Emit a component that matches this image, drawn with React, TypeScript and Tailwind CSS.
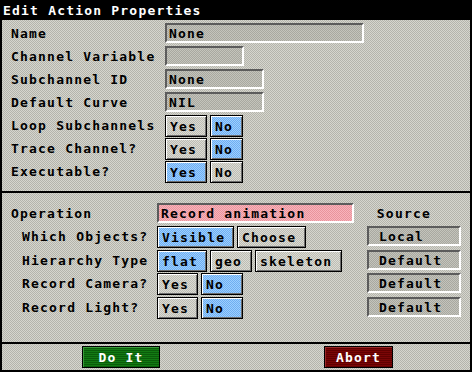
import React from 'react';

// Dithered backgrounds, like the old Motif/SGI panels
const DITHER_BG = "bg-[repeating-conic-gradient(#d6d6ce_0%_25%,#b4b4ac_0%_50%)] bg-[length:2px_2px]";
const FIELD_BG = "bg-[repeating-conic-gradient(#c4c4bc_0%_25%,#a8a8a0_0%_50%)] bg-[length:2px_2px]";
const BLUE_BG = "bg-[repeating-conic-gradient(#9ccfff_0%_25%,#70aef0_0%_50%)] bg-[length:2px_2px]";
const PINK_BG = "bg-[repeating-conic-gradient(#f8b4bc_0%_25%,#e8949c_0%_50%)] bg-[length:2px_2px]";
const BTN_BG = "bg-[repeating-conic-gradient(#dcdcd4_0%_25%,#bcbcb4_0%_50%)] bg-[length:2px_2px]";

const font = "font-['DejaVu_Sans_Mono','Liberation_Mono',monospace] font-bold text-[13px] tracking-[1.2px] leading-none";

function Field({ w, text, bg = FIELD_BG, pad = "pl-[2px]" }: { w: string; text?: string; bg?: string; pad?: string }) {
  return (
    <div className={`${w} h-5 ${bg} border-2 border-t-[#5c5c5c] border-l-[#5c5c5c] border-r-white border-b-white flex items-center ${pad} text-black`}>
      {text}
    </div>
  );
}

function Btn({ w, text, on }: { w: string; text: string; on?: boolean }) {
  return (
    <div
      className={`${w} h-[22px] ${on ? BLUE_BG : BTN_BG} border border-black shadow-[inset_1px_1px_0_#ffffff,inset_-1px_-1px_0_#6c6c6c] flex items-center pl-[4px] text-black`}
    >
      {text}
    </div>
  );
}

export default function App() {
  const topRows = [
    { label: "Name", ctl: <Field w="w-[199px]" text="None" /> },
    { label: "Channel Variable", ctl: <Field w="w-[79px]" /> },
    { label: "Subchannel ID", ctl: <Field w="w-[99px]" text="None" /> },
    { label: "Default Curve", ctl: <Field w="w-[99px]" text="NIL" /> },
    {
      label: "Loop Subchannels",
      ctl: (
        <div className="flex gap-[3px]">
          <Btn w="w-[42px]" text="Yes" />
          <Btn w="w-[33px]" text="No" on />
        </div>
      ),
    },
    {
      label: "Trace Channel?",
      ctl: (
        <div className="flex gap-[3px]">
          <Btn w="w-[42px]" text="Yes" />
          <Btn w="w-[33px]" text="No" on />
        </div>
      ),
    },
    {
      label: "Executable?",
      ctl: (
        <div className="flex gap-[3px]">
          <Btn w="w-[42px]" text="Yes" on />
          <Btn w="w-[33px]" text="No" />
        </div>
      ),
    },
  ];

  return (
    <div className={`w-[472px] h-[372px] flex flex-col border-x-2 border-b-2 border-black ${DITHER_BG} ${font}`}>
      {/* Title bar */}
      <div className="h-5 -mx-[2px] bg-black text-white flex items-center pl-[3px]">
        Edit Action Properties
      </div>

      {/* Channel settings */}
      <div className="h-[171px] pt-[3px] pl-[9px] flex flex-col">
        {topRows.map((r) => (
          <div key={r.label} className="h-[23px] flex items-start">
            <div className="w-[154px] h-5 flex items-center text-black">{r.label}</div>
            {r.ctl}
          </div>
        ))}
      </div>

      <div className="h-[2px] bg-black" />

      {/* Operation settings */}
      <div className="h-[149px] pt-[10px] pl-[9px] pr-[9px] flex flex-col">
        <div className="h-[23px] flex items-start">
          <div className="w-[146px] h-5 flex items-center text-black">Operation</div>
          <Field w="w-[197px]" text="Record animation" bg={PINK_BG} />
          <div className="flex-1 h-5 flex items-center justify-end pr-[30px] text-black">Source</div>
        </div>

        <div className="h-[24px] flex items-start">
          <div className="w-[146px] h-5 flex items-center pl-[11px] text-black">Which Objects?</div>
          <div className="flex gap-[3px]">
            <Btn w="w-[77px]" text="Visible" on />
            <Btn w="w-[69px]" text="Choose" />
          </div>
          <div className="flex-1" />
          <Field w="w-[94px]" text="Local" pad="pl-[10px]" />
        </div>

        <div className="h-[23px] flex items-start">
          <div className="w-[146px] h-5 flex items-center pl-[11px] text-black">Hierarchy Type</div>
          <div className="flex gap-[3px]">
            <Btn w="w-[50px]" text="flat" on />
            <Btn w="w-[42px]" text="geo" />
            <Btn w="w-[87px]" text="skeleton" />
          </div>
          <div className="flex-1" />
          <Field w="w-[94px]" text="Default" pad="pl-[10px]" />
        </div>

        <div className="h-[24px] flex items-start">
          <div className="w-[146px] h-5 flex items-center pl-[11px] text-black">Record Camera?</div>
          <div className="flex gap-[3px]">
            <Btn w="w-[41px]" text="Yes" />
            <Btn w="w-[42px]" text="No" on />
          </div>
          <div className="flex-1" />
          <Field w="w-[94px]" text="Default" pad="pl-[10px]" />
        </div>

        <div className="h-[23px] flex items-start">
          <div className="w-[146px] h-5 flex items-center pl-[11px] text-black">Record Light?</div>
          <div className="flex gap-[3px]">
            <Btn w="w-[41px]" text="Yes" />
            <Btn w="w-[42px]" text="No" on />
          </div>
          <div className="flex-1" />
          <Field w="w-[94px]" text="Default" pad="pl-[10px]" />
        </div>
      </div>

      <div className="h-[2px] bg-black" />

      {/* Action buttons */}
      <div className="flex-1 flex items-center">
        <div className="ml-[80px] w-[78px] h-[22px] border border-black bg-[repeating-linear-gradient(#137a13_0px_1px,#0a5c0a_1px_2px)] shadow-[inset_1px_1px_0_#3a9a3a] flex items-center justify-center text-white">
          Do It
        </div>
        <div className="ml-[164px] w-[69px] h-[22px] border border-black bg-[repeating-linear-gradient(#7a0606_0px_1px,#600000_1px_2px)] shadow-[inset_1px_1px_0_#9a2a2a] flex items-center justify-center text-white">
          Abort
        </div>
      </div>
    </div>
  );
}
